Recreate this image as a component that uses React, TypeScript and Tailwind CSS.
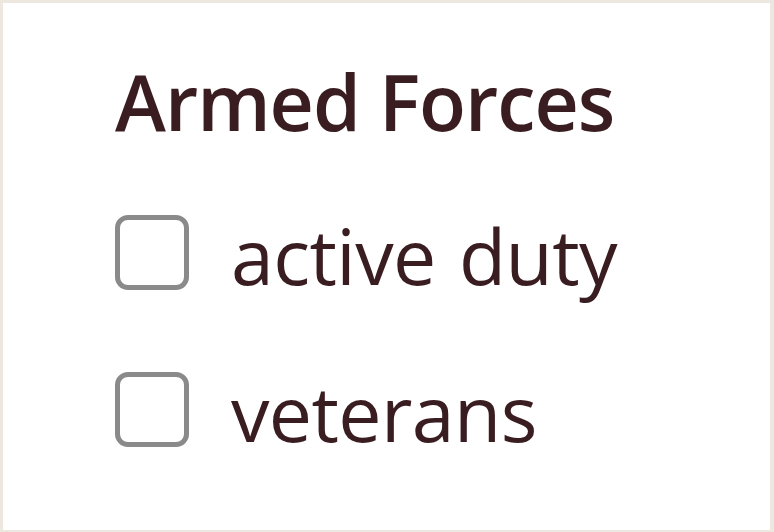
import React from "react";

const items = ["active duty", "veterans"];

export default function App() {
  return (
    <div className="w-[774px] h-[532px] bg-[#ece8df] pl-[3px] pt-[3px] pr-[4px] pb-[2px]">
      <div
        className="h-full w-full bg-white pl-[112px] pt-[49px] text-[#3a1d21]"
        style={{ fontFamily: '"Open Sans", "Noto Sans", sans-serif' }}
      >
        <h2 className="text-[77px] font-semibold leading-[100px] tracking-[-1px]">Armed Forces</h2>
        <ul className="mt-[63px] flex flex-col gap-[82px]">
          {items.map((label) => (
            <li key={label} className="flex items-center gap-[42px] h-[75px]">
              <span className="block w-[74px] h-[75px] rounded-[13px] border-[5px] border-[#8a8a8a] bg-white" />
              <span className="text-[77px] leading-[75px] pt-[6px] tracking-[-0.6px] [word-spacing:4px]">{label}</span>
            </li>
          ))}
        </ul>
      </div>
    </div>
  );
}
